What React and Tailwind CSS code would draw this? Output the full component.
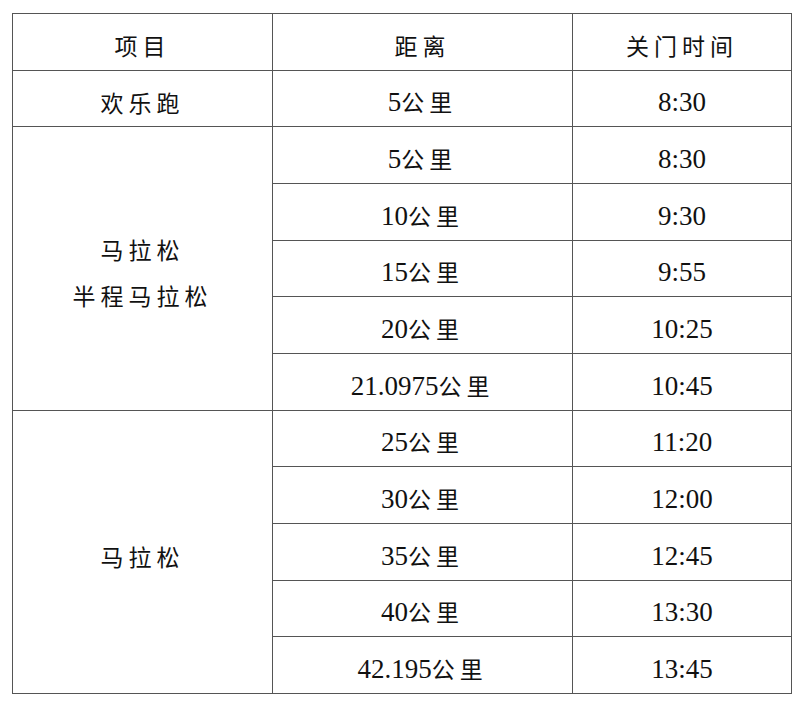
const rows = [
  { name: ["欢乐跑"], items: [["5", "8:30"]] },
  {
    name: ["马拉松", "半程马拉松"],
    items: [
      ["5", "8:30"],
      ["10", "9:30"],
      ["15", "9:55"],
      ["20", "10:25"],
      ["21.0975", "10:45"],
    ],
  },
  {
    name: ["马拉松"],
    items: [
      ["25", "11:20"],
      ["30", "12:00"],
      ["35", "12:45"],
      ["40", "13:30"],
      ["42.195", "13:45"],
    ],
  },
];

function Zh({ children }) {
  return (
    <span className="text-[23px] tracking-[5px] font-[family-name:'Noto_Sans_CJK_SC',sans-serif]">{children}</span>
  );
}

const cell = "border border-[#555] text-center align-middle pt-[9px] leading-none";

export default function App() {
  return (
    <div className="min-h-[701px] w-[800px] bg-white pl-[12px] pt-[13px] text-[#111] font-[family-name:'Liberation_Serif','Noto_Sans_CJK_SC',serif] text-[27px]">
      <table className="table-fixed border-collapse w-[779px]">
        <colgroup>
          <col className="w-[260px]" />
          <col className="w-[300px]" />
          <col className="w-[219px]" />
        </colgroup>
        <tbody>
          <tr className="h-[56.67px]">
            <td className={cell}><Zh>项目</Zh></td>
            <td className={cell}><Zh>距离</Zh></td>
            <td className={cell}><Zh>关门时间</Zh></td>
          </tr>
          {rows.map((g, gi) =>
            g.items.map(([dist, time], i) => (
              <tr key={gi + "-" + i} className="h-[56.67px]">
                {i === 0 && (
                  <td rowSpan={g.items.length} className={cell}>
                    <div className="flex flex-col items-center gap-[23px]">
                      {g.name.map((n) => (
                        <Zh key={n}>{n}</Zh>
                      ))}
                    </div>
                  </td>
                )}
                <td className={cell}>
                  {dist}
                  <Zh>公里</Zh>
                </td>
                <td className={cell}>{time}</td>
              </tr>
            ))
          )}
        </tbody>
      </table>
    </div>
  );
}
